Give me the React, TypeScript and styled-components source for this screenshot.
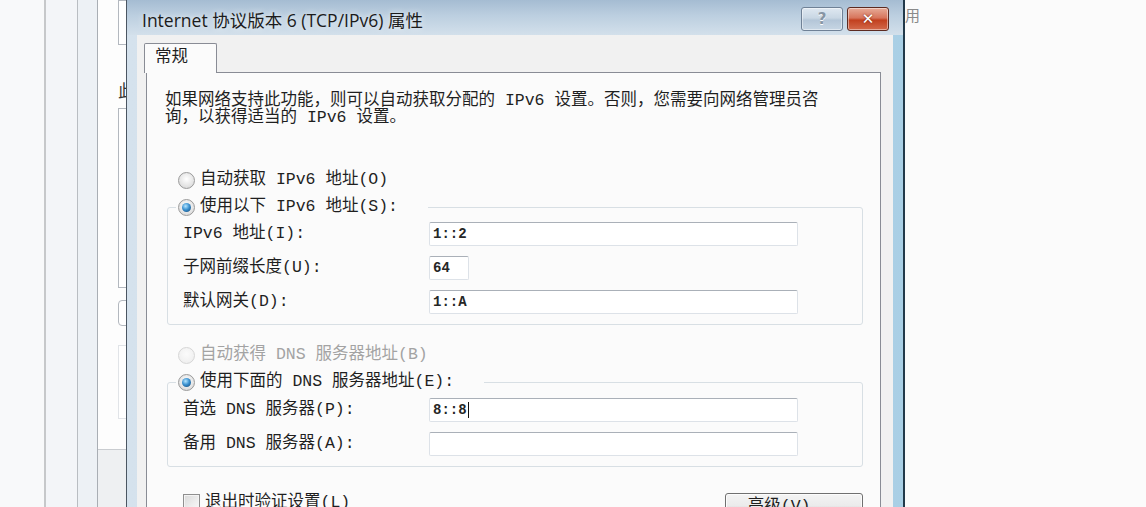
import styled, { createGlobalStyle } from "styled-components";

const UI_FONT = `"Liberation Mono", "Noto Sans CJK SC", monospace`;

const GlobalStyle = createGlobalStyle`
  * { box-sizing: border-box; }
  html, body { margin: 0; padding: 0; }
  body { background: #fbfbfb; overflow: hidden; }
`;

const Screen = styled.div`
  display: flex;
  width: 1146px;
  height: 507px;
  overflow: hidden;
  background: #fbfbfb;
`;

/* ---------- window behind, left side ---------- */

const Backdrop = styled.div`
  display: flex;
  width: 126px;
  flex-shrink: 0;
  overflow: hidden;
  background: #f8f9fa;
`;

const Strip = styled.div<{ $w: number; $bg: string; $line: string; $lineW?: number }>`
  width: ${(p) => p.$w}px;
  flex-shrink: 0;
  background: ${(p) => p.$bg};
  border-right: ${(p) => p.$lineW ?? 1}px solid ${(p) => p.$line};
`;

const BackPanel = styled.div`
  flex: 1;
  display: flex;
  flex-direction: column;
  background: #eef0f2;
`;

const BackPanelBody = styled.div`
  height: 450px;
  background: #fdfdfd;
  border-bottom: 1px solid #c9ccd0;
  display: flex;
  flex-direction: column;
  padding-left: 20px;
`;

const BackBox = styled.div<{ $h: number; $mt: number; $faint?: boolean; $round?: boolean }>`
  height: ${(p) => p.$h}px;
  margin-top: ${(p) => p.$mt}px;
  width: 40px;
  background: #ffffff;
  border: 1px solid ${(p) => (p.$faint ? "#e1e4e8" : "#b3b8bf")};
  border-radius: ${(p) => (p.$round ? "4px" : "0")};
`;

const BackGlyph = styled.div`
  margin-top: 36px;
  font: 17px/17px "Noto Sans CJK SC", sans-serif;
  color: #333;
  white-space: nowrap;
`;

/* ---------- window behind, right side ---------- */

const RightBack = styled.div`
  flex: 1;
  background: #fbfbfb;
  padding: 6px 0 0 0;
  font: 15px/18px "Noto Sans CJK SC", sans-serif;
  color: #8a8a8a;
`;

/* ---------- dialog ---------- */

const Dialog = styled.div`
  width: 779px;
  flex-shrink: 0;
  display: flex;
  flex-direction: column;
  border-left: 1px solid #4b5662;
  border-right: 2px solid #22394a;
  padding: 0 10px;
  background: linear-gradient(90deg, #d5e2ed 0%, #cddcea 55%, #a9cfe5 100%);
`;

const TitleBar = styled.div`
  height: 35px;
  margin: 0 -10px;
  padding: 0 14px 0 15px;
  display: flex;
  align-items: flex-start;
  background: linear-gradient(180deg, #a5bcd2 0%, #bccfe0 45%, #d3e0eb 100%);
`;

const Title = styled.div`
  flex: 1;
  padding-top: 8px;
  font: 17.5px/24px "Open Sans", "Noto Sans CJK SC", sans-serif;
  color: #1b1b1b;
  text-shadow: 0 0 6px rgba(255, 255, 255, 0.9);
  white-space: nowrap;
`;

const CaptionButton = styled.div<{ $close?: boolean }>`
  width: 42px;
  height: 24px;
  margin-top: 7px;
  margin-left: 4px;
  display: flex;
  align-items: center;
  justify-content: center;
  border: 1px solid ${(p) => (p.$close ? "#5c2a20" : "#6f8196")};
  border-radius: 3px;
  font: bold 15px/1 "DejaVu Sans", sans-serif;
  color: ${(p) => (p.$close ? "#ffffff" : "#8795a4")};
  background: ${(p) =>
    p.$close
      ? "linear-gradient(180deg, #e7ab98 0%, #d7755c 45%, #c2401f 55%, #d36a4b 100%)"
      : "linear-gradient(180deg, #dfe8f1 0%, #c9d7e4 45%, #b4c6d8 55%, #c7d6e4 100%)"};
  text-shadow: ${(p) => (p.$close ? "0 0 2px #6a1c0c" : "0 1px 0 #ffffff")};
  box-shadow: inset 0 0 0 1px rgba(255, 255, 255, 0.45);
`;

const Content = styled.div`
  flex: 1;
  display: flex;
  flex-direction: column;
  background: #f1f1f1;
  padding: 8px 12px 0 7px;
  min-height: 0;
`;

const TabRow = styled.div`
  display: flex;
  position: relative;
  z-index: 1;
  margin-bottom: -1px;
`;

const Tab = styled.div`
  width: 73px;
  height: 30px;
  padding: 4px 0 0 10px;
  border: 1px solid #898c95;
  border-bottom: none;
  border-radius: 2px 2px 0 0;
  background: #fbfbfb;
  font: 16.5px/20px ${UI_FONT};
  color: #1f1f1f;
`;

const Panel = styled.div`
  flex: 1;
  margin-left: 2px;
  border: 1px solid #898c95;
  background: #fbfbfb;
  padding: 0 0 0 18px;
  display: flex;
  flex-direction: column;
  align-items: flex-start;
`;

const Description = styled.p`
  margin: 19px 0 0;
  font: 16.5px/17px ${UI_FONT};
  color: #1f1f1f;
  white-space: nowrap;
`;

const OptionRow = styled.label<{ $mt: number; $disabled?: boolean }>`
  display: flex;
  align-items: center;
  gap: 5px;
  height: 20px;
  margin-top: ${(p) => p.$mt}px;
  margin-left: 13px;
  font: 16.5px/20px ${UI_FONT};
  color: ${(p) => (p.$disabled ? "#a3a3a3" : "#1f1f1f")};
  white-space: nowrap;
`;

const Radio = styled.span<{ $checked?: boolean; $disabled?: boolean }>`
  width: 17px;
  height: 17px;
  flex-shrink: 0;
  border-radius: 50%;
  display: flex;
  align-items: center;
  justify-content: center;
  border: 1px solid ${(p) => (p.$disabled ? "#d6d6d6" : "#9a9a9a")};
  background: ${(p) =>
    p.$disabled
      ? "radial-gradient(circle at 50% 40%, #fbfbfb, #ececec)"
      : "radial-gradient(circle at 50% 40%, #ffffff, #d2d2d2)"};

  &::after {
    content: "";
    display: ${(p) => (p.$checked ? "block" : "none")};
    width: 9px;
    height: 9px;
    border-radius: 50%;
    background: radial-gradient(circle at 40% 35%, #b6e6ff 0%, #3b92d1 45%, #0e3e6c 100%);
  }
`;

const Group = styled.fieldset<{ $mt: number }>`
  align-self: stretch;
  margin: ${(p) => p.$mt}px 17px 0 2px;
  padding: 0 0 10px;
  border: 1px solid #d8dfe4;
  border-radius: 3px;
  min-width: 0;
`;

const Legend = styled.legend`
  margin-left: 8px;
  padding: 0 30px 0 2px;
  display: flex;
  align-items: center;
  gap: 5px;
  height: 20px;
  font: 16.5px/20px ${UI_FONT};
  color: #1f1f1f;
  white-space: nowrap;
`;

const FieldGrid = styled.div<{ $mt: number }>`
  display: grid;
  grid-template-columns: 246px 369px;
  grid-auto-rows: 24px;
  row-gap: 10px;
  margin: ${(p) => p.$mt}px 0 0 15px;
`;

const FieldLabel = styled.span`
  display: flex;
  align-items: center;
  font: 16.5px/20px ${UI_FONT};
  color: #1f1f1f;
  white-space: nowrap;
`;

const TextBox = styled.div<{ $w?: number }>`
  width: ${(p) => (p.$w ? `${p.$w}px` : "100%")};
  height: 100%;
  display: flex;
  align-items: center;
  padding-left: 3px;
  background: #ffffff;
  border: 1px solid #dde2e8;
  border-top-color: #aab0b8;
  border-radius: 2px;
  font: bold 14px/1 "Liberation Mono", monospace;
  color: #262626;
`;

const Caret = styled.span`
  display: inline-block;
  width: 1px;
  height: 16px;
  margin-left: 1px;
  background: #111;
`;

const BottomRow = styled.div`
  align-self: stretch;
  display: flex;
  align-items: flex-start;
  justify-content: space-between;
  margin: 26px 17px 0 18px;
`;

const CheckRow = styled.label`
  display: flex;
  align-items: flex-start;
  gap: 5px;
  font: 16.5px/20px ${UI_FONT};
  color: #1f1f1f;
  white-space: nowrap;
`;

const Checkbox = styled.span`
  width: 17px;
  height: 17px;
  margin-top: 1px;
  border: 1px solid #8f8f8f;
  background: linear-gradient(135deg, #d9d9d9 0%, #eeeeee 60%, #f8f8f8 100%);
  box-shadow: inset 0 0 0 1px #f4f4f4;
`;

const Button = styled.div`
  width: 138px;
  height: 28px;
  display: flex;
  align-items: center;
  justify-content: center;
  border: 1px solid #707070;
  border-radius: 3px;
  background: linear-gradient(180deg, #f4f4f4 0%, #ebebeb 45%, #dddddd 55%, #cfcfcf 100%);
  box-shadow: inset 0 0 0 1px #fcfcfc;
  font: 16.5px/20px ${UI_FONT};
  color: #1f1f1f;
`;

export default function App() {
  return (
    <>
      <GlobalStyle />
      <Screen>
        <Backdrop>
          <Strip $w={46} $bg="#f8f9fa" $line="#c6c8ca" $lineW={2} />
          <Strip $w={32} $bg="#f3f5f8" $line="#b9bdc2" />
          <Strip $w={20} $bg="#edf1f5" $line="#a9aeb4" />
          <BackPanel>
            <BackPanelBody>
              <BackBox $h={45} $mt={0} />
              <BackGlyph>此</BackGlyph>
              <BackBox $h={180} $mt={10} />
              <BackBox $h={26} $mt={12} $round />
              <BackBox $h={74} $mt={19} $faint />
            </BackPanelBody>
          </BackPanel>
        </Backdrop>

        <Dialog>
          <TitleBar>
            <Title>Internet 协议版本 6 (TCP/IPv6) 属性</Title>
            <CaptionButton>?</CaptionButton>
            <CaptionButton $close>✕</CaptionButton>
          </TitleBar>

          <Content>
            <TabRow>
              <Tab>常规</Tab>
            </TabRow>
            <Panel>
              <Description>
                如果网络支持此功能，则可以自动获取分配的 IPv6 设置。否则，您需要向网络管理员咨
                <br />
                询，以获得适当的 IPv6 设置。
              </Description>

              <OptionRow $mt={44}>
                <Radio />
                自动获取 IPv6 地址(O)
              </OptionRow>

              <Group $mt={7}>
                <Legend>
                  <Radio $checked />
                  使用以下 IPv6 地址(S):
                </Legend>
                <FieldGrid $mt={5}>
                  <FieldLabel>IPv6 地址(I):</FieldLabel>
                  <TextBox>1::2</TextBox>
                  <FieldLabel>子网前缀长度(U):</FieldLabel>
                  <TextBox $w={40}>64</TextBox>
                  <FieldLabel>默认网关(D):</FieldLabel>
                  <TextBox>1::A</TextBox>
                </FieldGrid>
              </Group>

              <OptionRow $mt={20} $disabled>
                <Radio $disabled />
                自动获得 DNS 服务器地址(B)
              </OptionRow>

              <Group $mt={7}>
                <Legend>
                  <Radio $checked />
                  使用下面的 DNS 服务器地址(E):
                </Legend>
                <FieldGrid $mt={6}>
                  <FieldLabel>首选 DNS 服务器(P):</FieldLabel>
                  <TextBox>
                    8::8
                    <Caret />
                  </TextBox>
                  <FieldLabel>备用 DNS 服务器(A):</FieldLabel>
                  <TextBox />
                </FieldGrid>
              </Group>

              <BottomRow>
                <CheckRow>
                  <Checkbox />
                  退出时验证设置(L)
                </CheckRow>
                <Button>高级(V)...</Button>
              </BottomRow>
            </Panel>
          </Content>
        </Dialog>

        <RightBack>用</RightBack>
      </Screen>
    </>
  );
}
